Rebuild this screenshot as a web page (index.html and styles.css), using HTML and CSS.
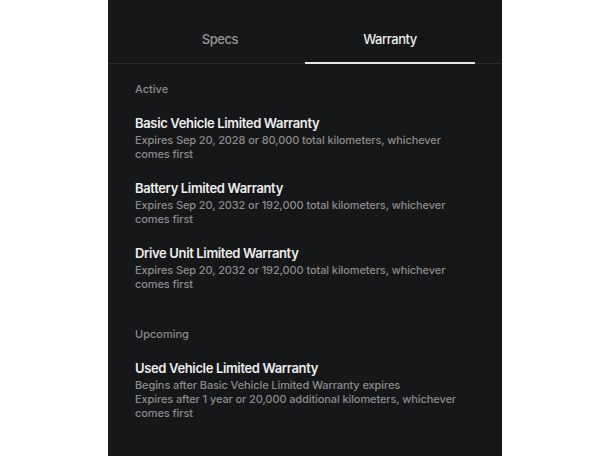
FILE: index.html
```html
<!DOCTYPE html>
<html>
<head>
<meta charset="utf-8">
<link rel="stylesheet" href="styles.css">
</head>
<body>
<div class="panel">
  <div class="tabs-wrap">
    <div class="tabs">
      <div class="tab">Specs</div>
      <div class="tab active">Warranty</div>
    </div>
  </div>
  <div class="content">
    <div class="section">
      <div class="label">Active</div>
      <div class="item">
        <div class="title">Basic Vehicle Limited Warranty</div>
        <div class="desc">Expires Sep 20, 2028 or 80,000 total kilometers, whichever comes first</div>
      </div>
      <div class="item">
        <div class="title">Battery Limited Warranty</div>
        <div class="desc">Expires Sep 20, 2032 or 192,000 total kilometers, whichever comes first</div>
      </div>
      <div class="item">
        <div class="title">Drive Unit Limited Warranty</div>
        <div class="desc">Expires Sep 20, 2032 or 192,000 total kilometers, whichever comes first</div>
      </div>
    </div>
    <div class="section">
      <div class="label">Upcoming</div>
      <div class="item">
        <div class="title">Used Vehicle Limited Warranty</div>
        <div class="desc">Begins after Basic Vehicle Limited Warranty expires</div>
        <div class="desc">Expires after 1 year or 20,000 additional kilometers, whichever comes first</div>
      </div>
    </div>
  </div>
</div>
</body>
</html>
```
FILE: styles.css
```css
html, body {
  margin: 0;
  padding: 0;
  background: #ffffff;
}
body {
  font-family: Inter, "Noto Sans", sans-serif;
  -webkit-font-smoothing: antialiased;
}
.panel {
  margin-left: 108px;
  width: 394px;
  height: 456px;
  background: #161719;
  overflow: hidden;
}
.tabs-wrap {
  border-bottom: 1px solid #2a2b2d;
}
.tabs {
  display: grid;
  grid-template-columns: 1fr 1fr;
  padding: 0 27px;
}
.tab {
  padding-top: 30px;
  padding-bottom: 14px;
  line-height: 18px;
  font-size: 13px;
  font-weight: 500;
  text-align: center;
  color: #959595;
  border-bottom: 2px solid transparent;
  margin-bottom: -1px;
  letter-spacing: -0.45px;
}
.tab.active {
  color: #ededed;
  border-bottom-color: #e6e6e6;
}
.content {
  padding: 18px 27px 0;
}
.section {
  display: flex;
  flex-direction: column;
  gap: 18px;
  margin-bottom: 36px;
}
.label {
  font-size: 11px;
  line-height: 14px;
  color: #8a8a8a;
  font-weight: 500;
}
.title {
  font-size: 13px;
  line-height: 18px;
  font-weight: 600;
  color: #ededed;
  margin-bottom: 1px;
  letter-spacing: -0.35px;
}
.desc {
  font-size: 11px;
  line-height: 14px;
  color: #8b8b8b;
  font-weight: 500;
  letter-spacing: -0.1px;
}
```
